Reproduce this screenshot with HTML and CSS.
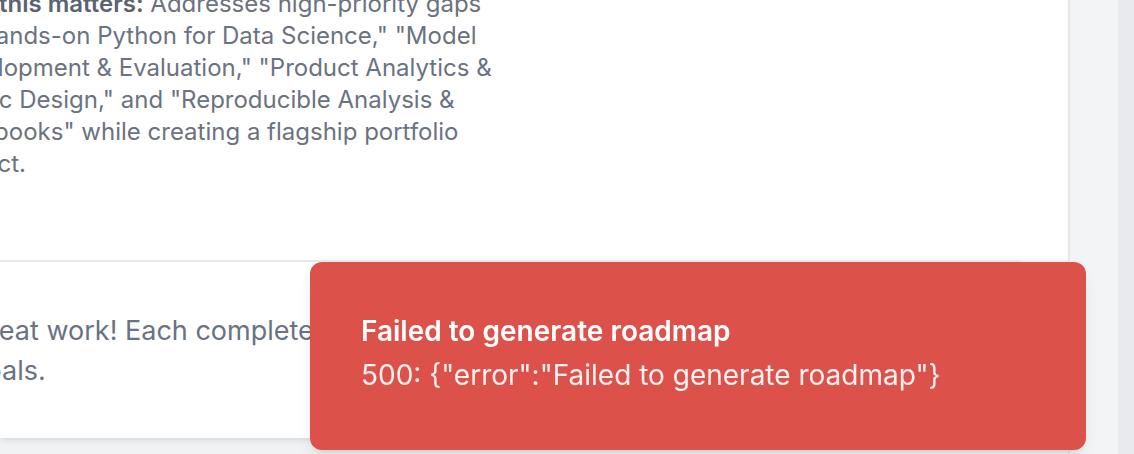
FILE: index.html
```html
<!DOCTYPE html>
<html lang="en">
<head>
<meta charset="utf-8">
<title>Roadmap</title>
<link rel="stylesheet" href="styles.css">
</head>
<body>
<div class="layout">
  <main class="main">
    <section class="card-top">
      <p class="why"><strong>Why this matters:</strong> Addresses high-priority gaps in "Hands-on Python for Data Science," "Model Development &amp; Evaluation," "Product Analytics &amp; Metric Design," and "Reproducible Analysis &amp; Notebooks" while creating a flagship portfolio project.</p>
    </section>
    <section class="card-bottom">
      <p class="note">Great work! Each completed milestone brings you closer to your career goals.</p>
    </section>
  </main>
  <aside class="aside"></aside>
  <div class="scrollbar"></div>
</div>
<div class="toast" role="alert">
  <div class="toast-title">Failed to generate roadmap</div>
  <div class="toast-desc">500: {"error":"Failed to generate roadmap"}</div>
</div>
</body>
</html>
```
FILE: styles.css
```css
* { box-sizing: border-box; }
html, body {
  margin: 0;
  padding: 0;
  width: 1134px;
  height: 454px;
  overflow: hidden;
  background: #f3f4f6;
  font-family: Inter, "Noto Sans", sans-serif;
}
.layout {
  display: flex;
  height: 454px;
}
.main {
  width: 1070px;
  border-right: 2px solid #e5e7eb;
  background: #f1f2f4;
  overflow: hidden;
}
.card-top {
  background: #ffffff;
  height: 260px;
  overflow: hidden;
}
.why {
  margin: -12px 0 0 -60px;
  width: 558px;
  font-size: 24px;
  line-height: 32px;
  color: #6b7280;
}
.why strong {
  font-weight: 600;
  color: #5b6270;
}
.card-bottom {
  width: 1020px;
  background: #ffffff;
  border-top: 2px solid #e5e7eb;
  padding: 49px 90px 47px 0;
  box-shadow: 0 4px 6px -1px rgba(0,0,0,0.08), 0 2px 4px -2px rgba(0,0,0,0.06);
}
.note {
  margin: 0 0 0 -31px;
  font-size: 27px;
  line-height: 40px;
  color: #6b7280;
}
.aside {
  width: 48px;
  background: #f3f4f6;
}
.scrollbar {
  width: 16px;
  background: #e9eaed;
}
.toast {
  position: fixed;
  left: 310px;
  top: 262px;
  width: 776px;
  height: 188px;
  border-radius: 12px;
  background: #dc524b;
  color: #ffffff;
  padding: 52px 51px;
  box-shadow: 0 10px 15px -3px rgba(0,0,0,0.1), 0 4px 6px -4px rgba(0,0,0,0.1);
}
.toast-title {
  font-size: 28px;
  line-height: 34px;
  font-weight: 600;
}
.toast-desc {
  margin-top: 10px;
  font-size: 28px;
  line-height: 34px;
  opacity: 0.92;
}
```
